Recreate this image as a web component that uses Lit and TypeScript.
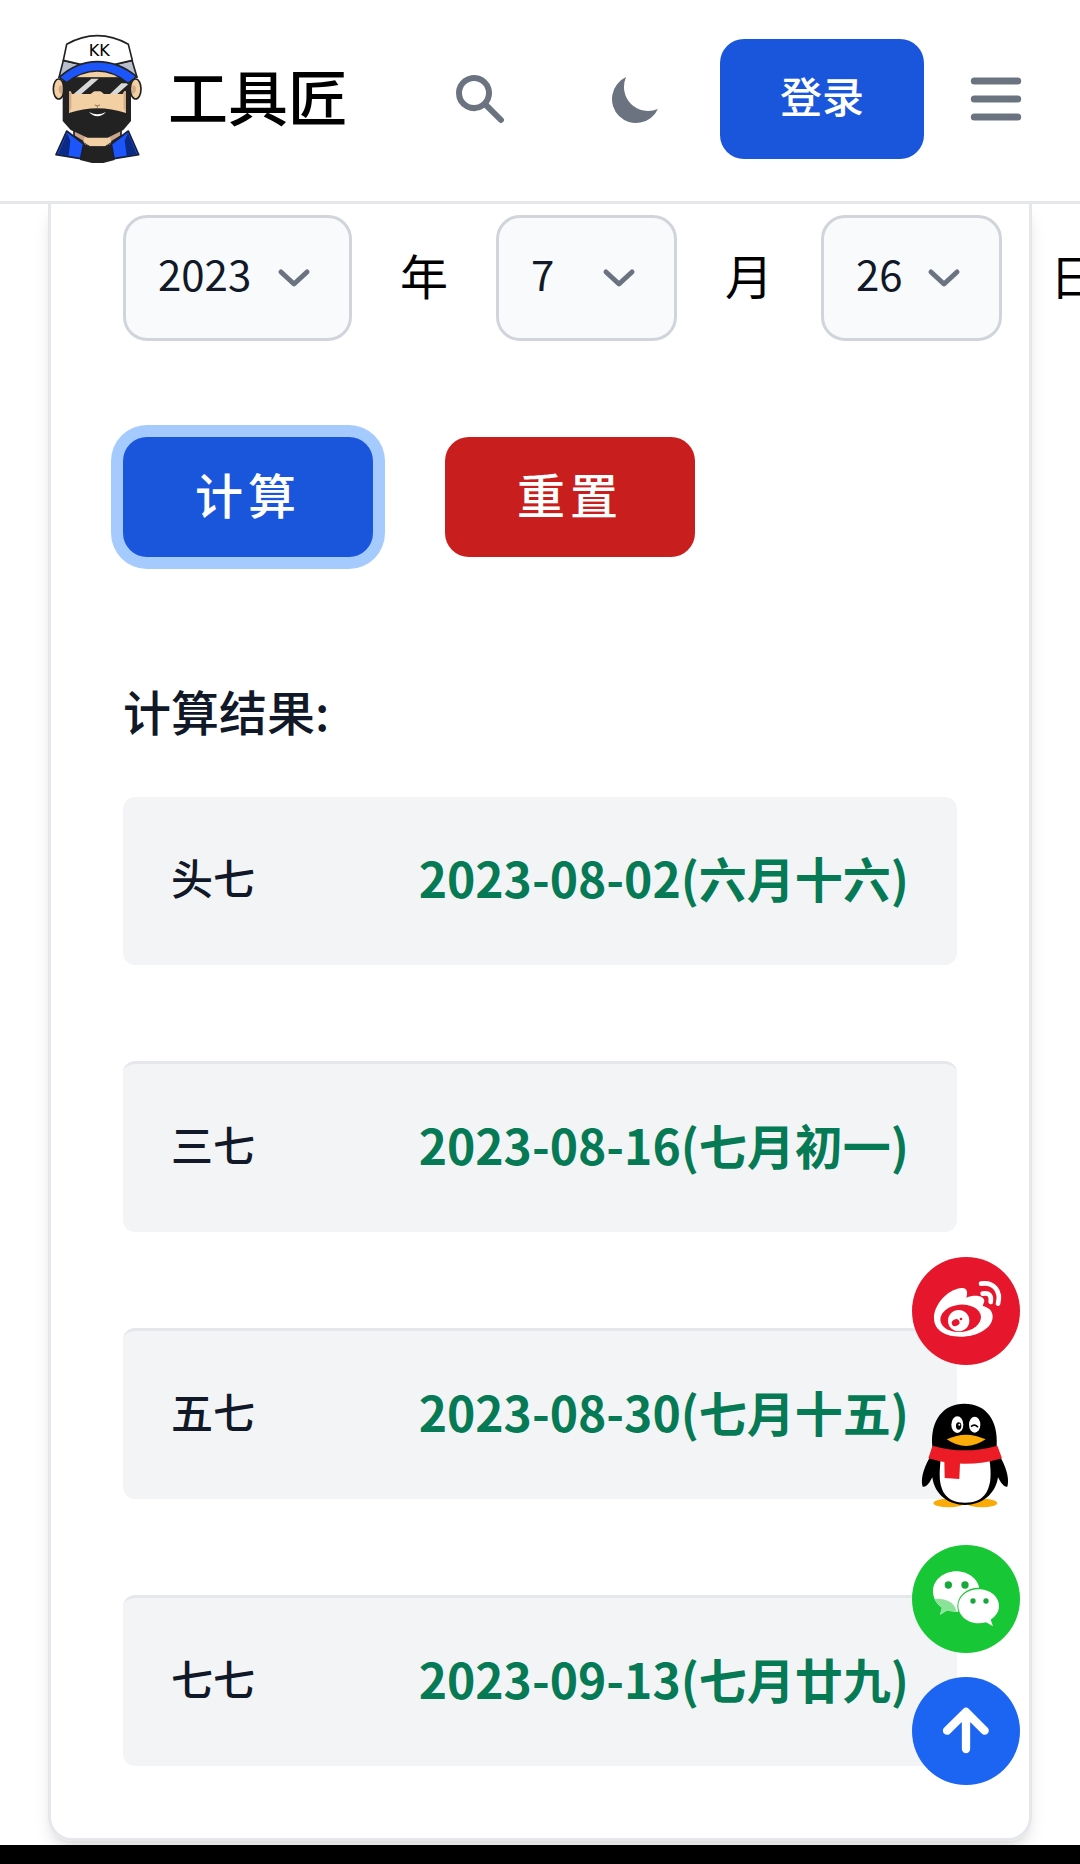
import { LitElement, html, css, svg } from "lit";
import { customElement, state } from "lit/decorators.js";

const logo = svg`
  <g stroke="#222" stroke-width="5" stroke-linejoin="round">
    <ellipse cx="56" cy="207" rx="16" ry="30" fill="#f3cfa4" />
    <ellipse cx="287" cy="207" rx="16" ry="30" fill="#f3cfa4" />
    <path d="M102 318V348L150 378H195L243 348V318Z" fill="#c9a68a" />
  </g>
  <path d="M60 196q-9 10 0 24l6 2v-24z M283 196q10 10 0 24l-6 2v-24z" fill="#d3ab85" />
  <path d="M134 352H210L214 366L195 379H150L130 366Z" fill="#f3cfa4" />
  <path d="M128 370L150 379H195L216 370L224 420L190 429H156L120 420Z" fill="#222" />
  <g stroke="#191f33" stroke-width="5" stroke-linejoin="round">
    <path d="M80 333L131 372L122 416L48 404Z" fill="#1c56fb" />
    <path d="M265 333L214 372L222 416L296 404Z" fill="#1c56fb" />
  </g>
  <path d="M81 340L91 362L86 408L54 402Z M264 340L254 362L260 408L290 402Z" fill="#0b2a86" />
  <path d="M68 170H273V303L250 330L203 353H143L92 330L68 303Z" fill="#222" />
  <path d="M87 214H258V279Q215 265 172 265Q130 265 87 279Z" fill="#f3cfa4" />
  <path d="M87 217h7v48l-7 12z M258 217h-7v48l7 12z" fill="#d3ab85" />
  <path d="M106 172Q172 136 238 172Z" fill="#f3cfa4" />
  <path d="M88 173H256L262 195L248 222H192L180 212H164L152 222H96L84 195Z" fill="#222" />
  <path d="M154 176H176L124 222H101Z M244 190H268L232 222H210Z" fill="#d8d8d8" />
  <path d="M164 255Q172 260 180 255M172 258V263" fill="none" stroke="#8f7357" stroke-width="3" />
  <path d="M147 276Q172 302 198 276Q172 290 147 276Z" fill="#fff" />
  <g stroke="#222" stroke-width="5" stroke-linejoin="round">
    <path d="M70 121L57 172L125 134Z M276 121L291 172L222 134Z" fill="#b9bfcc" />
    <path d="M80 73Q125 47 172 47Q220 47 265 73L277 121L222 134H125L70 121Z" fill="#fff" />
    <path d="M58 172Q110 125 172 125Q236 125 290 170L264 190Q222 153 172 153Q124 153 80 188Z" fill="#1c56fb" />
  </g>
  <text class="cap" x="178" y="107" text-anchor="middle">KK</text>`;

const weibo = svg`
  <circle cx="258" cy="213" r="162" fill="#e6162d" />
  <path fill="#fff" d="M162 236C160 200 197 150 243 144C262 142 264 156 259 173C286 162 314 168 313 184L308 198C326 202 338 212 338 230C338 264 292 290 241 290C195 289 163 270 162 236Z" />
  <ellipse cx="242" cy="235" rx="61" ry="41" transform="rotate(-6 242 235)" fill="#e6162d" />
  <circle cx="236" cy="242" r="32" fill="#fff" />
  <ellipse cx="227" cy="248" rx="12" ry="10" transform="rotate(-30 227 248)" fill="#e6162d" />
  <circle cx="243" cy="237" r="4" fill="#e6162d" />
  <path d="M303 131C342 125 364 154 354 191M308 161Q337 156 332 186" fill="none" stroke="#fff" stroke-width="14" stroke-linecap="round" />`;

const qq = svg`
  <ellipse cx="206" cy="789" rx="46" ry="13" fill="#faab07" />
  <ellipse cx="306" cy="789" rx="46" ry="13" fill="#faab07" />
  <path d="M157 620C150 540 190 491 253 491C318 491 356 540 350 620L363 655C382 690 388 722 382 740C372 742 362 728 354 712C346 764 305 795 255 795C205 795 164 764 157 712C149 728 140 742 128 740C122 722 128 690 148 655Z" />
  <path d="M182 655H328C334 700 334 730 320 756C304 782 282 788 255 788C228 788 206 782 190 756C176 730 178 700 182 655Z" fill="#fff" />
  <path d="M158 617Q253 645 352 617L366 655Q255 688 145 655Z" fill="#eb1c26" />
  <path d="M193 662L240 668L238 717L194 714Z" fill="#eb1c26" />
  <ellipse cx="232" cy="554" rx="18" ry="25" fill="#fff" />
  <ellipse cx="284" cy="554" rx="17" ry="24" fill="#fff" />
  <ellipse cx="236" cy="558" rx="8" ry="11" />
  <circle cx="238" cy="554" r="3" fill="#fff" />
  <path d="M273 560Q284 550 294 562" fill="none" stroke="#000" stroke-width="5" />
  <path d="M200 598Q258 570 317 598Q258 638 200 598Z" fill="#faab07" />`;

const wechat = svg`
  <circle cx="258" cy="237" r="162" fill="#17c735" />
  <path fill="#fff" d="M229 154C268 154 299 181 299 214C299 248 268 274 229 275C220 275 210 274 202 271L180 284L186 263C169 252 159 234 159 214C159 181 190 154 229 154Z" />
  <path fill="#8be39a" d="M164 237C190 234 226 244 229 275C220 275 210 274 202 271L180 284L186 263C176 256 168 247 164 237Z" />
  <ellipse cx="296" cy="258" rx="64" ry="55" fill="#17c735" />
  <path fill="#fff" d="M296 208C330 208 357 230 357 258C357 275 347 289 332 299L339 319L318 307C311 309 304 310 296 310C262 310 235 286 235 258C235 230 262 208 296 208Z" />
  <g fill="#17a83a">
    <circle cx="205" cy="195" r="11" /><circle cx="255" cy="195" r="11" />
    <circle cx="279" cy="243" r="8" /><circle cx="318" cy="243" r="8" />
  </g>`;

const range = (from: number, to: number) =>
  Array.from({ length: to - from + 1 }, (_, i) => from + i);

@customElement("app-root")
export class AppRoot extends LitElement {
  @state() private results = [
    { name: "头七", date: "2023-08-02(六月十六)" },
    { name: "三七", date: "2023-08-16(七月初一)" },
    { name: "五七", date: "2023-08-30(七月十五)" },
    { name: "七七", date: "2023-09-13(七月廿九)" },
  ];

  static styles = css`
    :host {
      display: flex;
      flex-direction: column;
      min-height: 100vh;
      overflow-x: clip;
      background: #fff;
      color: #111827;
      font-family: "Noto Sans CJK SC", sans-serif;
      font-size: 48px;
      line-height: 72px;
    }
    * { box-sizing: border-box; }
    button, select { font: inherit; border: 0; margin: 0; cursor: pointer; }
    svg { display: block; }
    .header {
      position: sticky;
      top: 0;
      z-index: 2;
      display: flex;
      align-items: center;
      justify-content: space-between;
      padding: 33px 48px 36px;
      background: #fff;
      border-bottom: 3px solid #e5e7eb;
    }
    .brand {
      display: flex;
      align-items: center;
      gap: 24px;
      color: #000;
      font-size: 60px;
      font-weight: 500;
      text-decoration: none;
      white-space: nowrap;
    }
    .brand-name { padding-bottom: 8px; }
    .brand svg { width: 96px; height: 132px; }
    .cap { font: 48px "DejaVu Sans", sans-serif; fill: #000; }
    .actions { display: flex; align-items: center; }
    .icon {
      padding: 30px;
      background: none;
      color: #6b7280;
      fill: currentColor;
    }
    .icon svg { width: 60px; height: 60px; }
    .search { margin-right: 36px; }
    .moon { margin-right: 24px; }
    .menu { padding: 0; margin-left: 36px; }
    .menu svg { width: 72px; height: 72px; }
    .button {
      height: 120px;
      padding: 0 72px 8px;
      border-radius: 24px;
      background: #1a56db;
      color: #fff;
      font-weight: 500;
      letter-spacing: 5px;
      white-space: nowrap;
    }
    .login { padding: 0 60px 8px; font-size: 42px; letter-spacing: normal; }
    .primary { box-shadow: 0 0 0 12px #a4cafe; }
    .danger { background: #c81e1e; }
    .card {
      margin: 0 48px 4px;
      padding: 11px 72px 72px;
      border: 3px solid #e5e7eb;
      border-top: 0;
      border-radius: 0 0 24px 24px;
      box-shadow: 0 12px 18px -3px rgba(0, 0, 0, 0.1), 0 6px 12px -6px rgba(0, 0, 0, 0.1);
    }
    .dates { display: flex; align-items: center; gap: 48px; color: #000; }
    .unit { flex: none; padding-bottom: 8px; }
    .picker { display: grid; flex: none; align-items: center; width: 181px; }
    .year { width: 229px; }
    .picker select, .picker svg { grid-area: 1 / 1; }
    .picker select {
      appearance: none;
      width: 100%;
      height: 126px;
      padding: 0 0 10px 32px;
      border: 3px solid #d1d5db;
      border-radius: 24px;
      background: #f9fafb;
      color: #111827;
      font-size: 42px;
    }
    .picker svg {
      justify-self: end;
      width: 36px;
      height: 36px;
      margin-right: 40px;
      pointer-events: none;
      fill: none;
      stroke: #6b7280;
      stroke-width: 5;
      stroke-linecap: round;
      stroke-linejoin: round;
    }
    .buttons { display: flex; gap: 72px; margin-top: 96px; }
    .title { margin: 117px 0 51px; font-size: 48px; font-weight: 500; }
    .results { display: flex; flex-direction: column; gap: 96px; margin: 0; }
    .result {
      display: flex;
      align-items: center;
      justify-content: space-between;
      padding: 44px 48px 52px;
      border-radius: 12px;
      background: #f3f4f6;
    }
    .result + .result { border-top: 3px solid #e5e7eb; }
    .name { font-size: 42px; font-weight: 500; }
    .date { margin: 0; color: #057a55; font-weight: 700; white-space: nowrap; }
    .float {
      position: fixed;
      right: 60px;
      bottom: 79px;
      z-index: 1;
      display: flex;
      flex-direction: column;
      gap: 36px;
    }
    .float svg { width: 108px; height: 108px; }
    .top { padding: 0; margin-top: -12px; background: none; }
    .bar { position: relative; height: 19px; margin-top: auto; background: #000; }
  `;

  private picker(label: string, cls: string, values: number[], value: number) {
    return html`<div class="picker ${cls}">
      <select aria-label=${label}>
        ${values.map((v) => html`<option ?selected=${v === value}>${v}</option>`)}
      </select>
      <svg viewBox="0 0 36 36" aria-hidden="true"><path d="M5 12L18 24L31 12" /></svg>
    </div>`;
  }

  render() {
    return html`
      <header class="header">
        <a class="brand" href="#">
          <svg viewBox="24 39 288 396" aria-hidden="true">${logo}</svg>
          <span class="brand-name">工具匠</span>
        </a>
        <div class="actions">
          <button class="icon search" aria-label="搜索">
            <svg viewBox="0 0 20 20"><path fill-rule="evenodd" d="M8 4a4 4 0 100 8 4 4 0 000-8zM2 8a6 6 0 1110.89 3.476l4.817 4.817a1 1 0 01-1.414 1.414l-4.816-4.816A6 6 0 012 8z" /></svg>
          </button>
          <button class="icon moon" aria-label="深色模式">
            <svg viewBox="0 0 20 20"><path d="M17.293 13.293A8 8 0 016.707 2.707a8.001 8.001 0 1010.586 10.586z" /></svg>
          </button>
          <button class="button login">登录</button>
          <button class="icon menu" aria-label="菜单">
            <svg viewBox="0 0 20 20"><path d="M3 5a1 1 0 011-1h12a1 1 0 110 2H4a1 1 0 01-1-1zM3 10a1 1 0 011-1h12a1 1 0 110 2H4a1 1 0 01-1-1zM3 15a1 1 0 011-1h12a1 1 0 110 2H4a1 1 0 01-1-1z" /></svg>
          </button>
        </div>
      </header>
      <main class="card">
        <div class="dates">
          ${this.picker("年", "year", range(1950, 2050), 2023)}
          <span class="unit">年</span>
          ${this.picker("月", "", range(1, 12), 7)}
          <span class="unit">月</span>
          ${this.picker("日", "", range(1, 31), 26)}
          <span class="unit">日</span>
        </div>
        <div class="buttons">
          <button class="button primary">计算</button>
          <button class="button danger">重置</button>
        </div>
        <h2 class="title">计算结果:</h2>
        <dl class="results">
          ${this.results.map(
            (r) => html`<div class="result">
              <dt class="name">${r.name}</dt>
              <dd class="date">${r.date}</dd>
            </div>`
          )}
        </dl>
      </main>
      <nav class="float" aria-label="分享">
        <a href="#weibo" aria-label="微博"><svg viewBox="96 51 324 324">${weibo}</svg></a>
        <a href="#qq" aria-label="QQ"><svg viewBox="96 483 324 324">${qq}</svg></a>
        <a href="#wechat" aria-label="微信"><svg viewBox="96 75 324 324">${wechat}</svg></a>
        <button class="top" aria-label="返回顶部">
          <svg viewBox="0 0 324 324">
            <circle cx="162" cy="162" r="162" fill="#1c64f2" />
            <path d="M162 216V105M105 161L162 105L218 161" fill="none" stroke="#fff" stroke-width="25" stroke-linecap="round" stroke-linejoin="round" />
          </svg>
        </button>
      </nav>
      <div class="bar"></div>
    `;
  }
}
